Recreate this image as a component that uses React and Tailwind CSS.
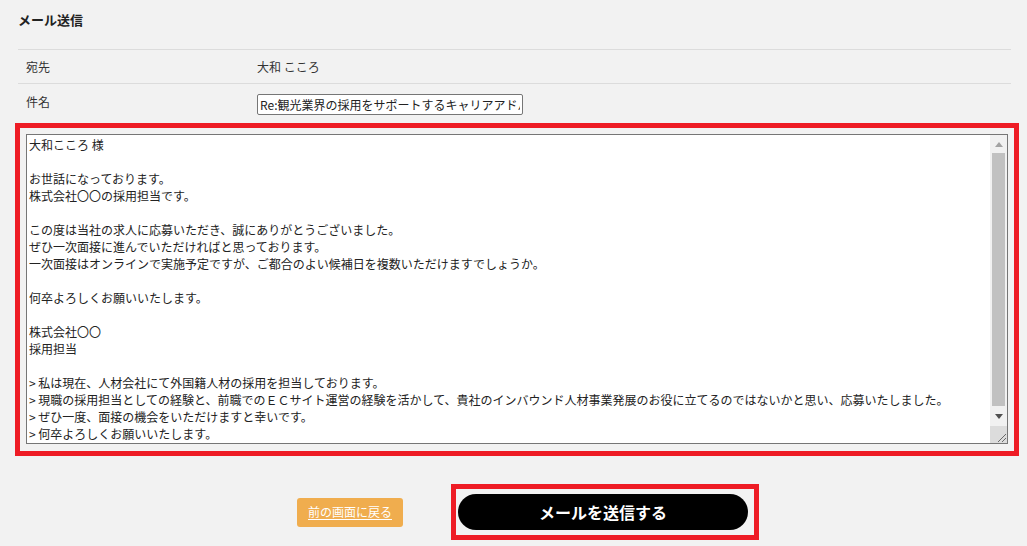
import React from 'react';

const body = `大和こころ 様

お世話になっております。
株式会社〇〇の採用担当です。

この度は当社の求人に応募いただき、誠にありがとうございました。
ぜひ一次面接に進んでいただければと思っております。
一次面接はオンラインで実施予定ですが、ご都合のよい候補日を複数いただけますでしょうか。

何卒よろしくお願いいたします。

株式会社〇〇
採用担当

> 私は現在、人材会社にて外国籍人材の採用を担当しております。
> 現職の採用担当としての経験と、前職でのＥＣサイト運営の経験を活かして、貴社のインバウンド人材事業発展のお役に立てるのではないかと思い、応募いたしました。
> ぜひ一度、面接の機会をいただけますと幸いです。
> 何卒よろしくお願いいたします。`;

const FakeScrollbar = () => (
  <div className="w-[17px] flex flex-col bg-[#f1f1f1]">
    <div className="h-[18px] flex items-center justify-center">
      <svg width="8" height="5" viewBox="0 0 8 5"><path d="M0 5 L4 0 L8 5 Z" fill="#a3a3a3" /></svg>
    </div>
    <div className="flex-1 px-[2px]">
      <div className="h-full bg-[#c1c1c1]" />
    </div>
    <div className="h-[20px] flex items-center justify-center">
      <svg width="8" height="5" viewBox="0 0 8 5"><path d="M0 0 L8 0 L4 5 Z" fill="#505050" /></svg>
    </div>
    <div className="h-[17px] bg-[#dcdcdc] flex items-end justify-end">
      <svg width="12" height="12" viewBox="0 0 12 12">
        <path d="M11 3 L3 11 M11 7 L7 11" stroke="#6b6b6b" strokeWidth="1" />
      </svg>
    </div>
  </div>
);

const App = () => {
  return (
    <div className="min-h-screen bg-[#f2f2f2] text-[#333] font-['Noto_Sans_CJK_JP','Liberation_Sans',sans-serif]">
      <div className="pl-[18px] pr-[16px] pt-[12px]">
        <h2 className="text-[13px] font-bold leading-[16px] text-[#222]">メール送信</h2>

        {/* Header rows */}
        <div className="mt-[21px] border-t border-[#dcdcdc] text-[12px]">
          <div className="flex items-center h-[34px] border-b border-[#dcdcdc]">
            <span className="w-[239px] pl-[8px]">宛先</span>
            <span>大和 こころ</span>
          </div>
          <div className="flex items-start pt-[10px] h-[39px]">
            <span className="w-[239px] pl-[8px] leading-[15px]">件名</span>
            <input
              type="text"
              readOnly
              defaultValue="Re:観光業界の採用をサポートするキャリアアドバイザー募集"
              className="w-[266px] h-[21px] px-[2px] text-[12px] bg-white border border-[#767676] rounded-[2px] text-[#222] outline-none"
            />
          </div>
        </div>
      </div>

      {/* Body */}
      <div className="ml-[15px] w-[1004px] border-[5px] border-[#ee1c25] pt-[6px] pb-[7px] px-[6px]">
        <div className="flex h-[310px] bg-white border border-[#767676]">
          <textarea
            readOnly
            defaultValue={body}
            className="flex-1 resize-none overflow-hidden pl-[2px] pt-[1px] text-[12px] leading-[17px] text-[#222] outline-none"
          />
          <FakeScrollbar />
        </div>
      </div>

      {/* Actions */}
      <div className="flex items-center pl-[297px] mt-[28px]">
        <button className="w-[106px] h-[29px] rounded-[3px] bg-[#f0ad4e] text-white text-[12px] underline underline-offset-2">
          前の画面に戻る
        </button>
        <div className="ml-[48px] border-[5px] border-[#ee1c25] pl-[2px] pr-[6px] py-[5px]">
          <button className="w-[290px] h-[36px] rounded-full bg-black text-white text-[16px] font-bold">
            メールを送信する
          </button>
        </div>
      </div>
    </div>
  );
};

export default App;
